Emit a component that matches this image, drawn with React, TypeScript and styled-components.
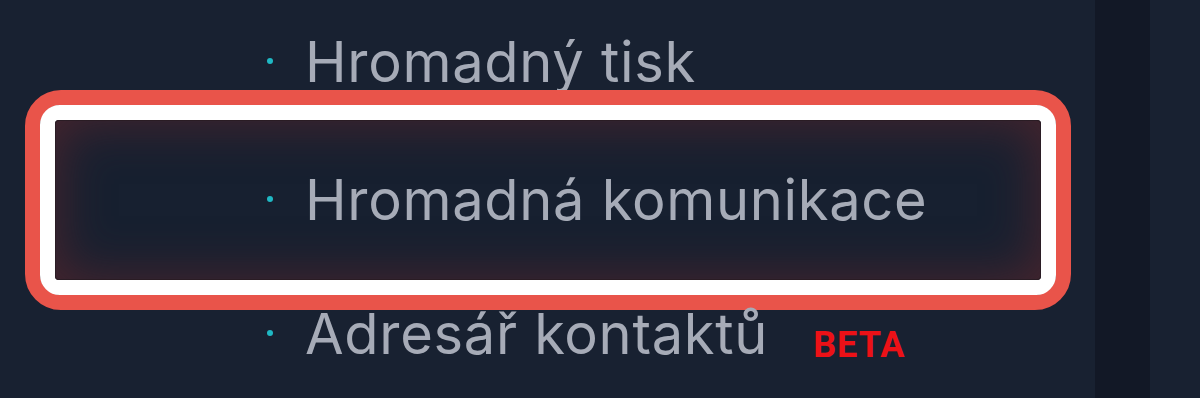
import React from "react";
import styled, { createGlobalStyle } from "styled-components";

const GlobalStyle = createGlobalStyle`
  html, body {
    margin: 0;
    padding: 0;
    background: #182131;
  }
  body {
    font-family: Inter, "Noto Sans", "Liberation Sans", sans-serif;
  }
`;

const Page = styled.div`
  display: flex;
  width: 1200px;
  height: 398px;
  overflow: hidden;
  background: #182131;
`;

const Sidebar = styled.div`
  width: 1095px;
  flex-shrink: 0;
  padding-top: 38px;
  display: flex;
  flex-direction: column;
`;

const Strip = styled.div`
  width: 55px;
  flex-shrink: 0;
  background: #121826;
`;

const Rest = styled.div`
  flex: 1;
  background: #182131;
`;

const Item = styled.div<{ indent: number }>`
  display: flex;
  align-items: center;
  padding-left: ${({ indent }) => indent + "px"};
  height: 48px;
  line-height: 48px;
  font-size: 56px;
  letter-spacing: 0.7px;
  color: #a6abb7;
  white-space: nowrap;
`;

const Dot = styled.span`
  width: 6px;
  height: 6px;
  border-radius: 50%;
  background: #1fb8c4;
  margin-right: 32px;
  margin-top: -3px;
  flex-shrink: 0;
`;

const Beta = styled.span`
  font-family: Roboto, "Liberation Sans", sans-serif;
  font-weight: 700;
  font-size: 36px;
  letter-spacing: 1px;
  color: #ec1117;
  margin-left: 45px;
  align-self: flex-end;
  line-height: 36px;
  margin-bottom: -5px;
`;

const RedRing = styled.div`
  margin: 4px 0 0 25px;
  width: 1046px;
  box-sizing: border-box;
  border: 15px solid #e9544a;
  border-radius: 36px;
`;

const WhiteRing = styled.div`
  border: 15px solid #ffffff;
  border-radius: 20px;
  background: #ffffff;
`;

const Highlight = styled.div`
  height: 160px;
  display: flex;
  align-items: center;
  border-radius: 4px;
  background: #172030;
  box-shadow: inset 0 0 0 1px #2a1c24, inset 0 0 50px 4px rgba(92, 38, 44, 0.7);
`;

const App: React.FC = () => {
  return (
    <>
      <GlobalStyle />
      <Page>
        <Sidebar>
          <Item indent={267}>
            <Dot />
            Hromadný tisk
          </Item>
          <RedRing>
            <WhiteRing>
              <Highlight>
                <Item indent={212}>
                  <Dot />
                  Hromadná komunikace
                </Item>
              </Highlight>
            </WhiteRing>
          </RedRing>
          <Item indent={267}>
            <Dot />
            Adresář kontaktů
            <Beta>BETA</Beta>
          </Item>
        </Sidebar>
        <Strip />
        <Rest />
      </Page>
    </>
  );
};

export default App;
